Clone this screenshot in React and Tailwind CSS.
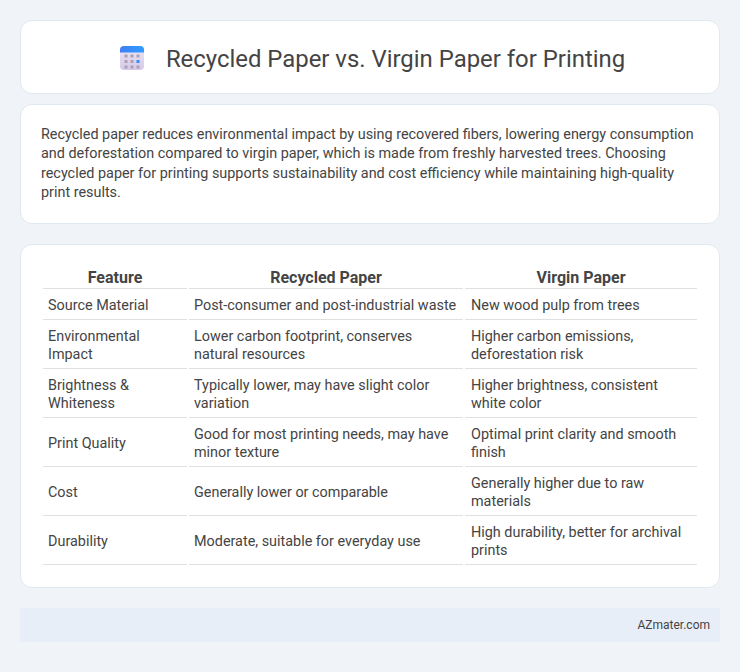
const rows = [
  ['Source Material', 'Post-consumer and post-industrial waste', 'New wood pulp from trees'],
  ['Environmental Impact', 'Lower carbon footprint, conserves natural resources', 'Higher carbon emissions, deforestation risk'],
  ['Brightness & Whiteness', 'Typically lower, may have slight color variation', 'Higher brightness, consistent white color'],
  ['Print Quality', 'Good for most printing needs, may have minor texture', 'Optimal print clarity and smooth finish'],
  ['Cost', 'Generally lower or comparable', 'Generally higher due to raw materials'],
  ['Durability', 'Moderate, suitable for everyday use', 'High durability, better for archival prints'],
];

function CalendarIcon() {
  return (
    <svg width="26" height="26" viewBox="0 0 26 26" className="shrink-0">
      <defs>
        <linearGradient id="head" x1="0" y1="0" x2="1" y2="0">
          <stop offset="0" stopColor="#3f7ff5" />
          <stop offset="1" stopColor="#2f9bff" />
        </linearGradient>
        <linearGradient id="body" x1="0" y1="0" x2="0" y2="1">
          <stop offset="0" stopColor="#eee8f4" />
          <stop offset="1" stopColor="#d6c8e8" />
        </linearGradient>
      </defs>
      <rect x="1" y="0" width="24" height="24" rx="4" fill="url(#body)" />
      <path d="M1 6.5V4a4 4 0 0 1 4-4h16a4 4 0 0 1 4 4v2.5z" fill="url(#head)" />
      {[5.5, 11.5, 17.5].map((x) =>
        [9, 14.5, 20].map((y) => (
          <rect
            key={`${x}-${y}`}
            x={x}
            y={y - 0.5}
            width="3"
            height="3"
            fill={x === 17.5 && y === 14.5 ? '#2f8fff' : '#aaa0b8'}
          />
        ))
      )}
    </svg>
  );
}

export default function App() {
  return (
    <div className="min-h-[672px] bg-[#f0f4f8] p-5 font-['Roboto',sans-serif] text-[#444]">
      <div className="flex h-[74px] items-center justify-center gap-[21px] rounded-xl border border-[#e2e8f0] bg-white pt-1 pl-1">
        <CalendarIcon />
        <h1 className="text-[23.9px] leading-[36px] font-normal">Recycled Paper vs. Virgin Paper for Printing</h1>
      </div>

      <div className="mt-2.5 rounded-xl border border-[#e2e8f0] bg-white px-5 py-5">
        <p className="text-[14.4px] leading-[19.44px]">
          Recycled paper reduces environmental impact by using recovered fibers, lowering energy consumption and deforestation compared to virgin paper, which is made from freshly harvested trees. Choosing recycled paper for printing supports sustainability and cost efficiency while maintaining high-quality print results.
        </p>
      </div>

      <div className="mt-5 rounded-xl border border-[#e2e8f0] bg-white px-5 py-5">
        <table className="w-full border-separate border-spacing-[2px] text-[14.4px] leading-[18px]">
          <thead>
            <tr>
              <th className="w-[144px] border-b border-[#e0e0e0] px-[5px] text-center text-base leading-[21px] font-bold">Feature</th>
              <th className="w-[274px] border-b border-[#e0e0e0] px-[5px] text-center text-base leading-[21px] font-bold">Recycled Paper</th>
              <th className="border-b border-[#e0e0e0] px-[5px] text-center text-base leading-[21px] font-bold">Virgin Paper</th>
            </tr>
          </thead>
          <tbody>
            {rows.map((row) => (
              <tr key={row[0]}>
                {row.map((cell) => (
                  <td key={cell} className="border-b border-[#e0e0e0] pt-[6px] pr-[5px] pb-[4px] pl-[5px] last:pl-[6px]">{cell}</td>
                ))}
              </tr>
            ))}
          </tbody>
        </table>
      </div>

      <div className="mt-5 flex h-[34px] items-center justify-end bg-[#e8eef8] px-2.5 text-xs">
        AZmater.com
      </div>
    </div>
  );
}
